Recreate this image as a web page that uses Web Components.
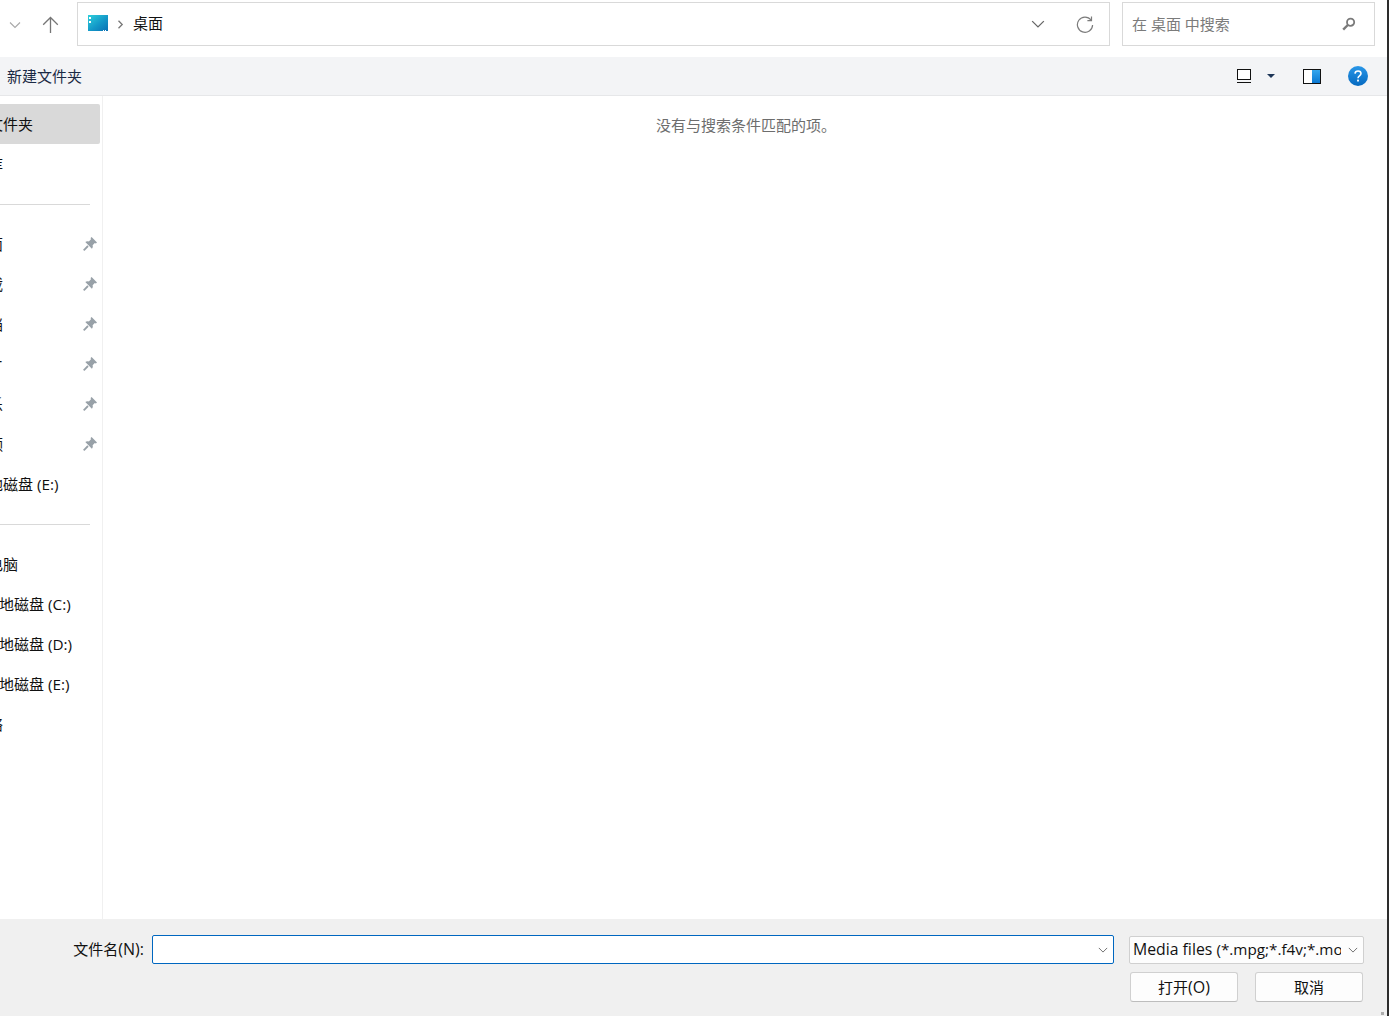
<!DOCTYPE html>
<html lang="zh-CN"><head><meta charset="utf-8">
<style>
html,body{margin:0;padding:0;height:100%;overflow:hidden;background:#fff}
body{font-family:"Open Sans","Noto Sans CJK SC",sans-serif;font-size:15px;color:#1a1a1a}
file-dialog{width:1389px;height:1016px}
</style></head><body>
<file-dialog></file-dialog>
<script>
const FONT='"Open Sans","Noto Sans CJK SC",sans-serif';
const chev=(w=12,c='#777')=>`<svg width="${w}" height="${w}" viewBox="0 0 12 12" fill="none" stroke="${c}" stroke-width="1.1"><path d="M1 3.5 6 8.5 11 3.5"/></svg>`;
class NavBar extends HTMLElement{constructor(){super();this.attachShadow({mode:'open'}).innerHTML=`<style>
:host{display:flex;height:57px;box-sizing:border-box;background:#fff;padding:2px 14px 11px 0;align-items:stretch}
.nav{display:flex;width:77px;box-sizing:border-box;padding:2px 0 0 9px;align-items:center;gap:21px}
.box{border:1px solid #d9d9d9;box-sizing:border-box;display:flex;align-items:center}
.addr{width:1033px;padding:0 15px 0 10px}
.folder{width:20px;height:16px;margin-top:-2px;display:block}
.sep{margin:0 9px 0 9px;display:block}
.crumb{flex:1;font-size:15px;color:#111;margin-top:-3px}
.drop{margin-right:31px;display:block;margin-top:2px}
.refresh{display:block;margin-top:2px}
.search{width:253px;margin-left:12px;padding:0 18px 0 9px;justify-content:space-between}
.search span{color:#7b7b7b;font-size:15px;margin-top:-1px}
</style>
<div class="nav">${chev(12,'#a8a8a8')}
<svg width="17" height="18" viewBox="0 0 17 18" fill="none" stroke="#767676" stroke-width="1.3"><path d="M8.5 17V1.5M1.2 8.8 8.5 1.5l7.3 7.3"/></svg></div>
<div class="box addr">
<svg class="folder" viewBox="0 0 20 16"><defs><linearGradient id="d" x1="0" y1="0" x2="1" y2="1"><stop offset="0" stop-color="#2fd0dc"/><stop offset=".55" stop-color="#1398c8"/><stop offset="1" stop-color="#0a70b4"/></linearGradient></defs><rect width="20" height="16" fill="url(#d)"/><rect x="1" y="2" width="2" height="2" fill="#fff"/><rect x="1" y="6" width="2" height="2" fill="#fff"/><path d="M15 15h1v1h-1zM17 15h1v1h-1z" fill="#fff"/></svg>
<svg class="sep" width="7" height="9" viewBox="0 0 7 9" fill="none" stroke="#777" stroke-width="1.3"><path d="M1.5 .8 5.2 4.5 1.5 8.2"/></svg>
<span class="crumb">桌面</span>
<span class="drop">${chev(14,'#666')}</span>
<svg class="refresh" width="18" height="18" viewBox="0 0 18 18" fill="none" stroke="#7c7c7c" stroke-width="1.2"><path d="M15 4A7.6 7.6 0 1 0 16.6 9"/><path d="M15.5 .5V4.6H11.4"/></svg>
</div>
<div class="box search"><span>在 桌面 中搜索</span>
<svg width="14" height="14" viewBox="0 0 14 14" fill="none" stroke="#7a7a7a"><circle cx="8.6" cy="5.2" r="3.6" stroke-width="1.8"/><path d="M5.8 8 1.2 12.6" stroke-width="2.4"/></svg></div>`}}
class ToolBar extends HTMLElement{constructor(){super();this.attachShadow({mode:'open'}).innerHTML=`<style>
:host{display:flex;height:39px;box-sizing:border-box;background:#f3f4f6;border-bottom:1px solid #e6e7e9;align-items:center;padding:0 21px 0 7px}
.new{flex:1;font-size:15px;color:#1b2a44;margin-top:-2px}
.view{display:block;margin-right:16px}.arrow{display:block;margin-right:28px}.pane{display:block;margin-right:27px}
</style>
<span class="new">新建文件夹</span>
<svg class="view" width="14" height="14" viewBox="0 0 14 14"><rect x=".5" y=".5" width="13" height="10" fill="#fff" stroke="#111"/><path d="M0 13.5h14" stroke="#111"/></svg>
<svg class="arrow" width="8" height="4" viewBox="0 0 8 4"><path d="M0 0h8L4 4z" fill="#1d3557"/></svg>
<svg class="pane" width="18" height="15" viewBox="0 0 18 15"><defs><linearGradient id="p" x1="0" y1="0" x2="0" y2="1"><stop offset="0" stop-color="#35a7ee"/><stop offset="1" stop-color="#0a78d2"/></linearGradient></defs><rect x=".5" y=".5" width="17" height="14" fill="#fff" stroke="#111"/><rect x="9" y="1" width="8" height="13" fill="url(#p)"/></svg>
<svg width="20" height="20" viewBox="0 0 20 20"><defs><linearGradient id="h" x1="0" y1="0" x2="0" y2="1"><stop offset="0" stop-color="#2a97e8"/><stop offset="1" stop-color="#0569c0"/></linearGradient></defs><circle cx="10" cy="10" r="10" fill="url(#h)"/><path d="M7 7.6C7.2 5.8 8.5 5 10 5c1.8 0 3 1 3 2.6 0 2.3-3 2.3-3 4.6" fill="none" stroke="#fff" stroke-width="1.6"/><rect x="9.1" y="13.6" width="1.8" height="1.9" fill="#fff"/></svg>`}}
class NavItem extends HTMLElement{constructor(){super();this.attachShadow({mode:'open'}).innerHTML=`<style>
:host{display:flex;height:40px;align-items:center;box-sizing:border-box;width:100px;position:relative;white-space:nowrap;overflow:hidden;border-radius:0 2px 2px 0}
:host([selected]){background:#d9d9d9}
.t{position:relative;left:-27px;top:0;font-size:15px;line-height:20px;color:#111;flex:none}
:host([indent]) .t{left:-16px}
::slotted(i){font-style:normal;font-size:15.3px;line-height:1}
svg{position:absolute;right:3px;top:13px;display:none}
:host([pin]) svg{display:block}
</style><span class="t"><slot></slot></span>
<svg width="14" height="14" viewBox="0 0 14 14"><path d="M8.6 0 14 5.4 12.9 6.4 11.8 6 9.6 8.2C10.2 9.6 9.6 11 8.9 11.7L2.3 5.1C3 4.4 4.4 3.8 5.8 4.4L8 2.2 7.6 1.1z" fill="#98a1a8"/><path d="M5 9 .7 13.3" stroke="#98a1a8" stroke-width="1.8"/></svg>`}}
class SideBar extends HTMLElement{constructor(){super();this.attachShadow({mode:'open'}).innerHTML=`<style>
:host{display:block;width:103px;box-sizing:border-box;border-right:1px solid #f0f0f0;padding-top:8px;overflow:hidden;flex:none}
.hr{height:1px;background:#d9d9d9;width:90px;margin:20px 0 19px}
</style>
<nav-item selected>主文件夹</nav-item><nav-item>图库</nav-item><div class="hr"></div>
<nav-item pin>桌面</nav-item><nav-item pin>下载</nav-item><nav-item pin>文档</nav-item><nav-item pin>图片</nav-item><nav-item pin>音乐</nav-item><nav-item pin>视频</nav-item>
<nav-item>本地磁盘<i> (E:)</i></nav-item><div class="hr"></div>
<nav-item>此电脑</nav-item><nav-item indent>本地磁盘<i> (C:)</i></nav-item><nav-item indent>本地磁盘<i> (D:)</i></nav-item><nav-item indent>本地磁盘<i> (E:)</i></nav-item><nav-item>网络</nav-item>`}}
class ResultPane extends HTMLElement{constructor(){super();this.attachShadow({mode:'open'}).innerHTML=`<style>
:host{display:flex;flex:1;justify-content:center;padding:19px 0 0 0;color:#6d6d6d;font-size:15px;background:#fff}
span{line-height:20px;height:20px}
</style><span><slot></slot></span>`}}
class FooterBar extends HTMLElement{constructor(){super();this.attachShadow({mode:'open'}).innerHTML=`<style>
:host{display:flex;height:97px;box-sizing:border-box;background:#f0f0f0;flex-direction:column;padding:16px 25px 0 0;align-items:flex-end;font-size:15px;color:#111;position:relative}
.row{display:flex;align-items:center;height:29px}
label{margin-right:8px;font-size:15px;position:relative;top:-1px}
i{font-style:normal;font-size:16px}
.input{width:962px;height:29px;box-sizing:border-box;background:#fff;border:1px solid #0067c0;border-radius:2px;display:flex;align-items:center;justify-content:flex-end;padding-right:5px}
.select{width:235px;height:28px;margin-left:15px;box-sizing:border-box;background:#fdfdfd;border:1px solid #d0d0d0;border-radius:2px;display:flex;align-items:center;padding:0 5px 0 3px}
.select span{width:208px;overflow:hidden;white-space:nowrap;font-size:15.8px;line-height:20px;flex:none;position:relative;top:-1px}
.select span b{font-weight:400;font-size:15.25px}
.select svg{margin-left:7px}
.btns{display:flex;gap:17px;margin-top:8px;padding-right:1px}
button{all:unset;box-sizing:border-box;width:108px;height:30px;background:#fdfdfd;border:1px solid #d0d0d0;border-bottom-color:#bdbdbd;border-radius:3px;text-align:center;font:15px/26px ${FONT};color:#111}
.grip{position:absolute;right:5px;bottom:1px;width:3px;height:3px;background:#adadad}
</style>
<div class="row"><label>文件名<i>(N):</i></label><div class="input">${chev(10,'#666')}</div><div class="select"><span>Media files <b>(*.mpg;*.f4v;*.mov;*.mp4)</b></span>${chev(10,'#666')}</div></div>
<div class="btns"><button>打开<i>(O)</i></button><button>取消</button></div><div class="grip"></div>`}}
class FileDialog extends HTMLElement{constructor(){super();this.attachShadow({mode:'open'}).innerHTML=`<style>
:host{display:flex;flex-direction:column;font-family:${FONT};position:relative}
.main{flex:1;display:flex;min-height:0}
.edge{position:absolute;top:0;right:0;bottom:0;width:2px;background:#2d2d2d}
</style>
<nav-bar></nav-bar><tool-bar></tool-bar>
<div class="main"><side-bar></side-bar><result-pane>没有与搜索条件匹配的项。</result-pane></div>
<footer-bar></footer-bar><div class="edge"></div>`}}
customElements.define('nav-bar',NavBar);customElements.define('tool-bar',ToolBar);customElements.define('nav-item',NavItem);customElements.define('side-bar',SideBar);customElements.define('result-pane',ResultPane);customElements.define('footer-bar',FooterBar);customElements.define('file-dialog',FileDialog);
</script></body></html>
